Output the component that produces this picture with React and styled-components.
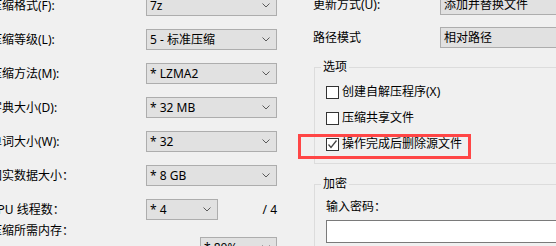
import React from "react";
import styled, { createGlobalStyle } from "styled-components";

const Global = createGlobalStyle`
  html, body { margin: 0; padding: 0; background: #f0f0f0; }
  body { font-family: "Noto Sans", "Noto Sans CJK SC", sans-serif; }
`;

const Frame = styled.div`
  width: 556px;
  height: 246px;
  overflow: hidden;
  background: #f0f0f0;
  color: #000;
  font-family: "Noto Sans", "Noto Sans CJK SC", sans-serif;
  font-size: 12px;
  line-height: 14px;
`;

const Dialog = styled.div`
  display: flex;
  align-items: flex-start;
  margin-left: -10px;
  margin-top: -5px;
`;

const LeftColumn = styled.div`
  display: flex;
  flex-direction: column;
  width: 287px;
  flex: none;
`;

const Row = styled.div`
  display: grid;
  grid-template-columns: ${(p) => p.$labelWidth}px 1fr;
  align-items: center;
  height: 21px;
  margin-bottom: ${(p) => p.$gap}px;
`;

const Label = styled.span`
  white-space: nowrap;
`;

const Combo = styled.div`
  box-sizing: border-box;
  height: 21px;
  width: ${(p) => (p.$width ? `${p.$width}px` : "auto")};
  border: 1px solid #adadad;
  background: #e1e1e1;
  display: flex;
  align-items: center;
  justify-content: space-between;
  padding: 0 6px 0 3px;
  white-space: nowrap;
  overflow: hidden;
`;

const SplitCell = styled.div`
  display: flex;
  align-items: center;
  justify-content: space-between;
`;

const MemoryRow = styled.div`
  display: grid;
  grid-template-columns: 210px 77px;
  align-items: start;
  margin-top: -9px;
`;

const MemoryCombo = styled(Combo)`
  margin-top: 13px;
`;

const RightColumn = styled.div`
  display: flex;
  flex-direction: column;
  margin-left: 36px;
  margin-top: -1px;
  width: 320px;
  flex: none;
`;

const GroupBox = styled.fieldset`
  margin: ${(p) => p.$top}px 0 0 1px;
  padding: 0 0 ${(p) => p.$bottom}px 6px;
  border: 1px solid #dcdcdc;
  min-width: 0;
  width: 300px;
  box-sizing: border-box;
`;

const Legend = styled.legend`
  padding: 0 2px;
  font-size: 12px;
  line-height: 14px;
`;

const CheckList = styled.div`
  display: flex;
  flex-direction: column;
  gap: 10px;
  margin-top: 10px;
  margin-left: 5px;
`;

const CheckRow = styled.label`
  position: relative;
  display: flex;
  align-items: center;
  gap: 3px;
  height: 16px;
  white-space: nowrap;
`;

const Box = styled.span`
  box-sizing: border-box;
  width: 13px;
  height: 13px;
  border: 1px solid #333;
  background: #fff;
  display: flex;
  align-items: center;
  justify-content: center;
  flex: none;
`;

const Highlight = styled.span`
  position: absolute;
  left: -28px;
  top: -2px;
  width: 173px;
  height: 25px;
  box-sizing: border-box;
  border: 3px solid #ff4646;
  pointer-events: none;
`;

const FieldLabel = styled.div`
  margin: 9px 0 0 5px;
`;

const TextInput = styled.div`
  box-sizing: border-box;
  margin: 6px 0 0 5px;
  height: 23px;
  width: 260px;
  border: 1px solid #7a7a7a;
  background: #fff;
`;

const Chevron = () => (
  <svg width="8" height="5" viewBox="0 0 8 5" fill="none">
    <polyline points="0.5,0.5 4,4 7.5,0.5" stroke="#5a5a5a" strokeWidth="1" />
  </svg>
);

const Check = () => (
  <svg width="11" height="11" viewBox="0 0 11 11" fill="none">
    <polyline points="1.5,5.5 4,8.5 9.5,1.5" stroke="#444" strokeWidth="1.3" />
  </svg>
);

const leftRows = [
  { label: "压缩格式(F):", value: "7z" },
  { label: "压缩等级(L):", value: "5 - 标准压缩" },
  { label: "压缩方法(M):", value: "* LZMA2" },
  { label: "字典大小(D):", value: "* 32 MB" },
  { label: "单词大小(W):", value: "* 32" },
  { label: "固实数据大小：", value: "* 8 GB" },
];

const options = [
  { text: "创建自解压程序(X)", checked: false },
  { text: "压缩共享文件", checked: false },
  { text: "操作完成后删除源文件", checked: true, highlight: true },
];

export default function App() {
  return (
    <Frame>
      <Global />
      <Dialog>
        <LeftColumn>
          {leftRows.map((r) => (
            <Row key={r.label} $labelWidth={156} $gap={13}>
              <Label>{r.label}</Label>
              <Combo>
                <span>{r.value}</span>
                <Chevron />
              </Combo>
            </Row>
          ))}
          <Row $labelWidth={156} $gap={13}>
            <Label>CPU 线程数：</Label>
            <SplitCell>
              <Combo $width={72}>
                <span>* 4</span>
                <Chevron />
              </Combo>
              <span>/ 4</span>
            </SplitCell>
          </Row>
          <MemoryRow>
            <Label>压缩所需内存：</Label>
            <MemoryCombo>
              <span>* 80%</span>
              <Chevron />
            </MemoryCombo>
          </MemoryRow>
        </LeftColumn>
        <RightColumn>
          <Row $labelWidth={127} $gap={12}>
            <Label>更新方式(U):</Label>
            <Combo>
              <span>添加并替换文件</span>
            </Combo>
          </Row>
          <Row $labelWidth={127} $gap={0}>
            <Label>路径模式</Label>
            <Combo>
              <span>相对路径</span>
            </Combo>
          </Row>
          <GroupBox $top={12} $bottom={11}>
            <Legend>选项</Legend>
            <CheckList>
              {options.map((o) => (
                <CheckRow key={o.text}>
                  <Box>{o.checked && <Check />}</Box>
                  <span>{o.text}</span>
                  {o.highlight && <Highlight />}
                </CheckRow>
              ))}
            </CheckList>
          </GroupBox>
          <GroupBox $top={13} $bottom={40}>
            <Legend>加密</Legend>
            <FieldLabel>输入密码：</FieldLabel>
            <TextInput />
          </GroupBox>
        </RightColumn>
      </Dialog>
    </Frame>
  );
}
